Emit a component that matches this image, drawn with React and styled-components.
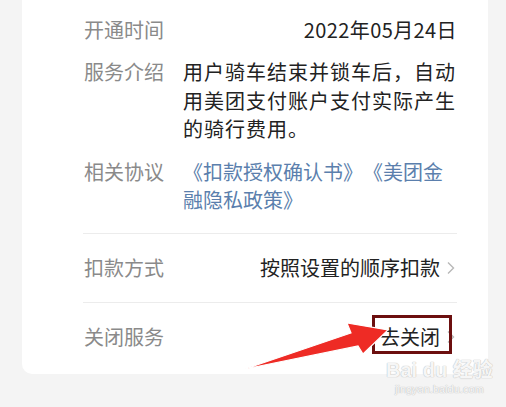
import React from "react";
import styled, { createGlobalStyle } from "styled-components";

const GlobalStyle = createGlobalStyle`
  body {
    margin: 0;
    background: #f4f4f4;
    font-family: "Noto Sans CJK SC", "Noto Sans", sans-serif;
  }
`;

const Page = styled.div`
  position: relative;
  width: 506px;
  height: 407px;
  overflow: hidden;
  background: #f4f4f4;
`;

const Card = styled.div`
  margin-left: 22px;
  width: 466px;
  box-sizing: border-box;
  padding: 16px 31px 23px 62px;
  background: #fff;
  border-radius: 0 0 10px 10px;
`;

const Section = styled.div`
  display: flex;
  flex-direction: column;
  gap: 14px;
  padding-bottom: 19px;
`;

const Row = styled.div`
  display: flex;
  align-items: flex-start;
  font-size: 20px;
  line-height: 28px;
`;

const ActionRow = styled(Row)`
  align-items: center;
  padding: ${(props) => (props.last ? "20px 0 0" : "20px 0")};
`;

const Label = styled.div`
  width: 99px;
  flex-shrink: 0;
  color: #8a8a8a;
`;

const Value = styled.div`
  flex: 1;
  color: #222;
  text-align: ${(props) => (props.right ? "right" : "left")};
  letter-spacing: ${(props) => props.tracking || "0"};
  line-height: ${(props) => (props.tall ? "28.5px" : "28px")};
  text-spacing-trim: space-all;
`;

const Link = styled.span`
  color: #5b7fad;
`;

const Divider = styled.div`
  height: 1px;
  margin-left: -1px;
  background: #ececec;
`;

const Action = styled.div`
  flex: 1;
  display: flex;
  justify-content: flex-end;
  align-items: center;
  gap: 7px;
  margin-right: 2px;
  color: #222;
`;

const Chevron = () => (
  <svg width="8" height="16" viewBox="0 0 8 16">
    <path d="M1 2.5 L6.5 8 L1 13.5" fill="none" stroke="#b8b8b8" strokeWidth="1.4" />
  </svg>
);

const Highlight = styled.div`
  position: absolute;
  left: 372px;
  top: 315px;
  width: 80px;
  height: 39px;
  box-sizing: border-box;
  border: 3px solid #6c0f0f;
`;

const Overlay = styled.svg`
  position: absolute;
  left: 0;
  top: 0;
  pointer-events: none;
`;

const Watermark = styled.div`
  position: absolute;
  left: 386px;
  top: 357px;
  display: flex;
  flex-direction: column;
  align-items: center;
  white-space: nowrap;
  color: rgba(255, 255, 255, 0.9);
  text-shadow: 0 0 1px #bdbdbd, 0 0 1px #bdbdbd;
  font-family: "Liberation Sans", "Noto Sans CJK SC", sans-serif;
`;

const Brand = styled.div`
  font-size: 20px;
  font-weight: bold;
  line-height: 26px;
`;

const Domain = styled.div`
  font-size: 11px;
  line-height: 12px;
`;

export default function App() {
  return (
    <Page>
      <GlobalStyle />
      <Card>
        <Section>
          <Row>
            <Label>开通时间</Label>
            <Value right tracking="0.4px">2022年05月24日</Value>
          </Row>
          <Row>
            <Label>服务介绍</Label>
            <Value tall tracking="1px">
              用户骑车结束并锁车后，自动用美团支付账户支付实际产生的骑行费用。
            </Value>
          </Row>
          <Row>
            <Label>相关协议</Label>
            <Value>
              <Link>《扣款授权确认书》《美团金融隐私政策》</Link>
            </Value>
          </Row>
        </Section>
        <Divider />
        <ActionRow>
          <Label>扣款方式</Label>
          <Action>
            按照设置的顺序扣款
            <Chevron />
          </Action>
        </ActionRow>
        <Divider />
        <ActionRow last>
          <Label>关闭服务</Label>
          <Action>
            去关闭
            <Chevron />
          </Action>
        </ActionRow>
      </Card>
      <Watermark>
        <Brand>Bai du 经验</Brand>
        <Domain>jingyan.baidu.com</Domain>
      </Watermark>
      <Highlight />
      <Overlay width="506" height="407">
        <polygon
          points="245,369 351,333 347,323 388,330 363,354 358,346"
          fill="#ee2b25"
          stroke="#ffffff"
          strokeWidth="1.2"
          strokeLinejoin="miter"
        />
      </Overlay>
    </Page>
  );
}
